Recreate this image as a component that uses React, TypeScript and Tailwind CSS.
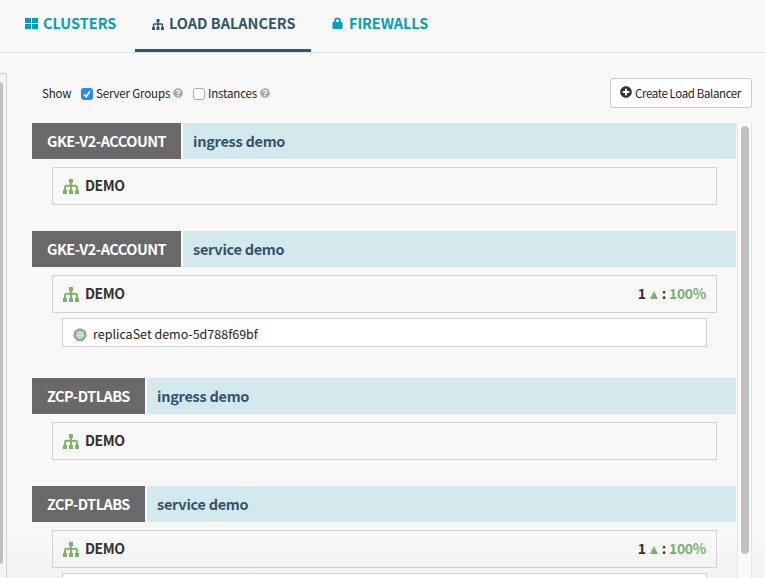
import React from 'react';
import { FaQuestionCircle, FaPlusCircle } from 'react-icons/fa';

function Sitemap({ className }: { className: string }) {
  return (
    <svg viewBox="0 0 16 15" preserveAspectRatio="none" className={className} fill="currentColor">
      <rect x="6" y="0" width="4" height="4" rx="0.6" />
      <rect x="0" y="11" width="4" height="4" rx="0.6" />
      <rect x="6" y="11" width="4" height="4" rx="0.6" />
      <rect x="12" y="11" width="4" height="4" rx="0.6" />
      <path d="M8 4V12M2 12V8.3Q2 6.8 3.5 6.8H12.5Q14 6.8 14 8.3V12" fill="none" stroke="currentColor" strokeWidth="1.9" />
    </svg>
  );
}

function Kube() {
  return (
    <svg viewBox="0 0 14 14" className="h-3.5 w-3.5 shrink-0">
      <path d="M7 .6 12 2.9 13.3 8.2 9.9 12.8H4.1L.7 8.2 2 2.9Z" fill="#86ad80" stroke="#86ad80" strokeLinejoin="round" />
      <circle cx="7" cy="7" r="3.1" fill="none" stroke="#eef4ed" strokeWidth="1" />
      <path d="M7 2.2V7L10.8 4M7 7l4.7 1.1M7 7l2.1 4.3M7 7l-2.1 4.3M7 7 2.3 8.1M7 7 3.2 4" fill="none" stroke="#eef4ed" strokeWidth=".8" />
    </svg>
  );
}

type Group = { account: string; wide: boolean; name: string; health: boolean; replicaSet?: string };
const groups: Group[] = [
  { account: 'GKE-V2-ACCOUNT', wide: true, name: 'ingress demo', health: false },
  { account: 'GKE-V2-ACCOUNT', wide: true, name: 'service demo', health: true, replicaSet: 'replicaSet demo-5d788f69bf' },
  { account: 'ZCP-DTLABS', wide: false, name: 'ingress demo', health: false },
  { account: 'ZCP-DTLABS', wide: false, name: 'service demo', health: true },
];

function LoadBalancer({ g }: { g: Group }) {
  return (
    <section className={g.health ? 'mb-[31px]' : 'mb-[26px]'}>
      <div className="flex h-9 gap-0.5 text-[14.5px] leading-9 whitespace-nowrap">
        <div className={`${g.wide ? 'w-[149px]' : 'w-[113px]'} shrink-0 bg-[#696969] pl-[15px] font-bold tracking-[-0.5px] text-white`}>{g.account}</div>
        <div className="flex-1 bg-[#d4e9ed] pl-2.5 font-bold tracking-[-0.27px] text-[#35536d]">{g.name}</div>
      </div>
      <div className="mt-2 mr-[19px] ml-5 flex h-[38px] items-center border border-[#d3d3d3] px-2.5 text-[14px] leading-5 font-bold tracking-[-0.4px] text-[#333]">
        <Sitemap className="mt-px h-[15px] w-4 text-[#7ab369]" />
        <span className="mb-0.5 ml-1.5">DEMO</span>
        {g.health && (
          <span className="mb-0.5 ml-auto flex items-center tracking-[-0.3px]">
            1
            <svg viewBox="0 0 8 8" className="mt-[3px] mr-1 ml-1 h-2 w-2" fill="#7ab369"><path d="M4 0 8 8H0Z" /></svg>
            :<span className="ml-[3px] text-[#7ab369]">100%</span>
          </span>
        )}
      </div>
      {g.health && (
        <div className="mt-[5px] mr-[29px] ml-[30px] flex h-[29px] items-center border border-[#d3d3d3] bg-white pt-1 pl-2.5 text-[12.5px] leading-5 text-[#222]">
          {g.replicaSet && (
            <>
              <Kube />
              <span className="mb-0.5 ml-1.5">{g.replicaSet}</span>
            </>
          )}
        </div>
      )}
    </section>
  );
}

export default function App() {
  return (
    <div className="flex h-[578px] w-[765px] flex-col overflow-hidden bg-[#f8f8f8] font-['Noto_Sans_CJK_SC','Open_Sans',sans-serif] text-[#222]">
      <nav className="flex h-[53px] shrink-0 border-b border-[#d4e9ed] text-[14.5px] leading-5 font-bold text-[#039eb9]">
        <div className="flex h-[47px] w-[135px] items-center pl-[25px]">
          <svg viewBox="0 0 13 11" className="h-[11px] w-[13px]" fill="currentColor"><path d="M0 0H6V5H0ZM7 0H13V5H7ZM0 6H6V11H0ZM7 6H13V11H7Z" /></svg>
          <span className="mb-0.5 ml-[5px]">CLUSTERS</span>
        </div>
        <div className="flex h-[52px] w-44 items-center border-b-[3px] border-[#35536d] pb-0.5 pl-[17px] whitespace-nowrap text-[#35536d]">
          <Sitemap className="mt-px h-[11px] w-3" />
          <span className="mb-0.5 ml-[5px]">LOAD BALANCERS</span>
        </div>
        <div className="flex h-[47px] items-center pl-[21px]">
          <svg viewBox="0 0 11 13" className="mb-px h-3 w-[11px]" fill="currentColor"><path d="M1 5.5H2V4a3.5 3.5 0 0 1 7 0V5.5h1q1 0 1 1V12q0 1-1 1H1q-1 0-1-1V6.5q0-1 1-1ZM4 5.5H7V4a1.5 1.5 0 0 0-3 0Z" /></svg>
          <span className="mb-0.5 ml-1.5 tracking-[-0.1px]">FIREWALLS</span>
        </div>
      </nav>
      <div className="flex min-h-0 flex-1 bg-linear-to-b from-[#f8f8f8] from-[92%] to-[#f3f3f3]">
        <aside className="mt-5 w-[7px] shrink-0 border-t border-r border-[#d3d3d3] bg-[#f5f5f5] pt-2">
          <div className="h-[482px] w-[3px] rounded-r-[3px] bg-[#c1c1c1]" />
        </aside>
        <main className="flex min-w-0 flex-1 flex-col pt-[25px]">
          <div className="flex h-[45px] shrink-0 items-start pr-[13px] pl-[35px] text-[11.5px] leading-[30px] tracking-[-0.15px]">
            <span className="w-[39px]">Show</span>
            <span className="mt-[10px] flex h-3 w-3 items-center justify-center rounded-[3px] bg-[#258afa]">
              <svg viewBox="0 0 12 12" className="h-3 w-3" fill="none" stroke="white" strokeWidth="1.7"><path d="M3 6.3 5.2 8.6 9 3.2" /></svg>
            </span>
            <span className="ml-[3px] w-[77px] whitespace-nowrap">Server Groups</span>
            <FaQuestionCircle className="mt-[10px] h-2.5 w-2.5 text-[#aaa]" />
            <span className="mt-[10px] ml-2.5 h-3 w-3 rounded-[3px] border border-[#aaa] bg-white" />
            <span className="ml-[3px] w-[52px] whitespace-nowrap">Instances</span>
            <FaQuestionCircle className="mt-[10px] h-2.5 w-2.5 text-[#aaa]" />
            <button className="ml-auto flex h-[30px] w-[142px] items-center rounded-[3px] border border-[#ccc] bg-white pl-[9px] text-[11.5px] tracking-[-0.38px] whitespace-nowrap">
              <FaPlusCircle className="mb-0.5 h-3 w-3 shrink-0 text-[#333]" />
              <span className="ml-[3px]">Create Load Balancer</span>
            </button>
          </div>
          <div className="flex min-h-0 flex-1 pl-[25px]">
            <div className="w-[704px] shrink-0 overflow-hidden">
              {groups.map((g, i) => <LoadBalancer g={g} key={i} />)}
            </div>
            <div className="ml-px w-[15px] border-x border-[#e6e6e6] bg-[#fafafa] pt-[3px] pl-[3px]">
              <div className="h-[428px] w-2 rounded-full bg-[#c1c1c1]" />
            </div>
          </div>
        </main>
      </div>
    </div>
  );
}
